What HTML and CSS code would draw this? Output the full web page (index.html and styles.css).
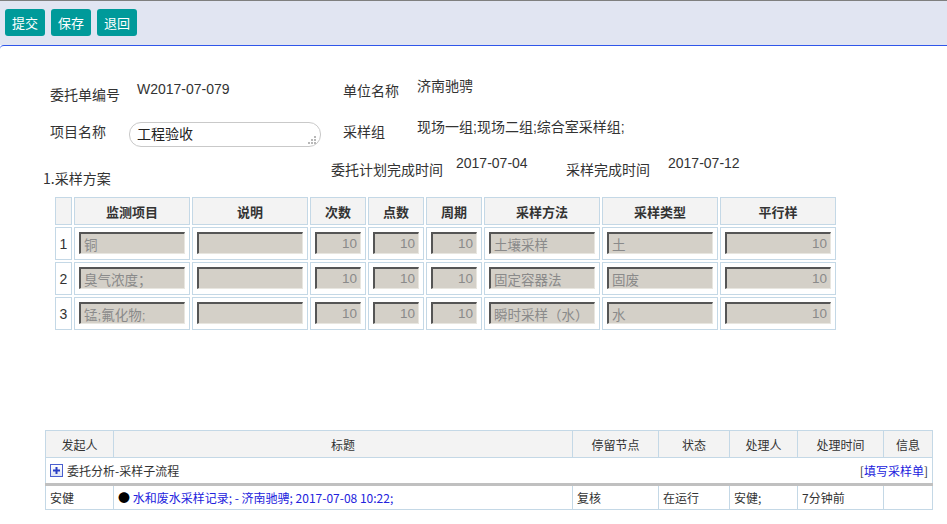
FILE: index.html
```html
<!DOCTYPE html>
<html lang="zh-CN">
<head>
<meta charset="utf-8">
<title>委托单</title>
<link rel="stylesheet" href="styles.css">
</head>
<body>
<div class="toolbar">
  <button class="btn">提交</button>
  <button class="btn">保存</button>
  <button class="btn">退回</button>
</div>
<div class="panel">
  <div class="frow r1">
    <div class="lbl w87 m8">委托单编号</div>
    <div class="val w206 m3">W2017-07-079</div>
    <div class="lbl w74 m4">单位名称</div>
    <div class="val m0">济南驰骋</div>
  </div>
  <div class="frow r2">
    <div class="lbl w79 m4">项目名称</div>
    <div class="tarea">工程验收<svg class="grip" width="10" height="10" viewBox="0 0 10 10"><g fill="#b8b8b8"><rect x="7" y="1" width="2" height="2"/><rect x="4" y="4" width="2" height="2"/><rect x="7" y="4" width="2" height="2"/><rect x="1" y="7" width="2" height="2"/><rect x="4" y="7" width="2" height="2"/><rect x="7" y="7" width="2" height="2"/></g></svg></div>
    <div class="lbl w74 m4 ml22">采样组</div>
    <div class="val m0">现场一组;现场二组;综合室采样组;</div>
  </div>
  <div class="frow r3">
    <div class="lbl w288 m15">1.采样方案</div>
    <div class="lbl w125 m6">委托计划完成时间</div>
    <div class="val w110 m0">2017-07-04</div>
    <div class="lbl w102 m6">采样完成时间</div>
    <div class="val m0">2017-07-12</div>
  </div>

  <table class="plan">
    <thead>
      <tr>
        <th class="c-idx"></th>
        <th class="c-wide">监测项目</th>
        <th class="c-wide">说明</th>
        <th class="c-num">次数</th>
        <th class="c-num">点数</th>
        <th class="c-num">周期</th>
        <th class="c-wide">采样方法</th>
        <th class="c-wide">采样类型</th>
        <th class="c-wide">平行样</th>
      </tr>
    </thead>
    <tbody>
      <tr>
        <td class="idx">1</td>
        <td><input class="fld" value="铜" readonly></td>
        <td><input class="fld" value="" readonly></td>
        <td><input class="fld num" value="10" readonly></td>
        <td><input class="fld num" value="10" readonly></td>
        <td><input class="fld num" value="10" readonly></td>
        <td><input class="fld" value="土壤采样" readonly></td>
        <td><input class="fld" value="土" readonly></td>
        <td><input class="fld num" value="10" readonly></td>
      </tr>
      <tr>
        <td class="idx">2</td>
        <td><input class="fld" value="臭气浓度；" readonly></td>
        <td><input class="fld" value="" readonly></td>
        <td><input class="fld num" value="10" readonly></td>
        <td><input class="fld num" value="10" readonly></td>
        <td><input class="fld num" value="10" readonly></td>
        <td><input class="fld" value="固定容器法" readonly></td>
        <td><input class="fld" value="固废" readonly></td>
        <td><input class="fld num" value="10" readonly></td>
      </tr>
      <tr>
        <td class="idx">3</td>
        <td><input class="fld" value="锰;氟化物;" readonly></td>
        <td><input class="fld" value="" readonly></td>
        <td><input class="fld num" value="10" readonly></td>
        <td><input class="fld num" value="10" readonly></td>
        <td><input class="fld num" value="10" readonly></td>
        <td><input class="fld" value="瞬时采样（水）" readonly></td>
        <td><input class="fld" value="水" readonly></td>
        <td><input class="fld num" value="10" readonly></td>
      </tr>
    </tbody>
  </table>

  <table class="flow">
    <colgroup>
      <col class="f1"><col class="f2"><col class="f3"><col class="f4"><col class="f5"><col class="f6"><col class="f7">
    </colgroup>
    <thead>
      <tr>
        <th>发起人</th>
        <th>标题</th>
        <th>停留节点</th>
        <th>状态</th>
        <th>处理人</th>
        <th>处理时间</th>
        <th>信息</th>
      </tr>
    </thead>
    <tbody>
      <tr class="grp">
        <td colspan="7">
          <div class="grp-in">
            <span class="plus"><svg width="11" height="11" viewBox="0 0 11 11"><path d="M5.5 2v7M2 5.5h7" stroke="#2a3fc4" stroke-width="2"/></svg></span>
            <span class="grp-title">委托分析-采样子流程</span>
            <span class="grp-act">[<a class="lnk">填写采样单</a>]</span>
          </div>
        </td>
      </tr>
      <tr class="data">
        <td>安健</td>
        <td><span class="dot">●</span> <a class="lnk">水和废水采样记录; - 济南驰骋; 2017-07-08 10:22;</a></td>
        <td>复核</td>
        <td>在运行</td>
        <td>安健;</td>
        <td>7分钟前</td>
        <td></td>
      </tr>
    </tbody>
  </table>
</div>
</body>
</html>
```

FILE: styles.css
```css
html, body {
  margin: 0;
  padding: 0;
  background: #fff;
}
body {
  font-family: "Liberation Sans", "Noto Sans CJK SC", sans-serif;
  color: #333;
  font-size: 14px;
}

.toolbar {
  box-sizing: border-box;
  height: 45px;
  border-top: 1px solid #7f7f7f;
  background: #e1e5f2;
  display: flex;
  align-items: flex-start;
  gap: 6px;
  padding: 8px 5px 0;
}
.btn {
  width: 40px;
  height: 27px;
  padding: 0;
  border: 0;
  border-radius: 3px;
  background: #009a9a;
  color: #fff;
  font-family: "Noto Sans CJK SC", sans-serif;
  font-size: 13px;
  line-height: 27px;
}

.panel {
  border-top: 1px solid #2f56ea;
  border-top-left-radius: 4px;
  padding-top: 30px;
}

.frow {
  display: flex;
  align-items: flex-start;
  line-height: 20px;
}
.r1 { height: 41px; padding-left: 50px; }
.r2 { height: 36px; padding-left: 50px; }
.r3 { height: 42px; padding-left: 43px; }

.lbl {
  font-family: "Noto Sans CJK SC", sans-serif;
  font-size: 14px;
  color: #333;
  white-space: nowrap;
}
.val {
  font-size: 14px;
  color: #333;
  white-space: nowrap;
}
.w74 { width: 74px; }
.w79 { width: 79px; }
.w87 { width: 87px; }
.w102 { width: 102px; }
.w110 { width: 110px; }
.w125 { width: 125px; }
.w206 { width: 206px; }
.w288 { width: 288px; }
.m0 { margin-top: 0; }
.m3 { margin-top: 3px; }
.m4 { margin-top: 4px; }
.m6 { margin-top: 6px; }
.m8 { margin-top: 8px; }
.m15 { margin-top: 15px; }
.ml22 { margin-left: 22px; }

.tarea {
  position: relative;
  box-sizing: border-box;
  width: 192px;
  height: 25px;
  margin-top: 5px;
  border: 1px solid #c9c9c9;
  border-radius: 12px;
  padding: 0 0 0 7px;
  font-family: "Noto Sans CJK SC", sans-serif;
  font-size: 14px;
  line-height: 20px;
  color: #222;
}
.grip {
  position: absolute;
  right: 3px;
  bottom: 1px;
}

/* plan table */
.plan {
  margin-left: 53px;
  border-collapse: separate;
  border-spacing: 2px;
  table-layout: fixed;
  width: 785px;
}
.plan th, .plan td {
  border: 1px solid #c4d8e6;
  padding: 0;
}
.plan th {
  height: 26px;
  background: #f3f3f3;
  font-family: "Noto Sans CJK SC", sans-serif;
  font-size: 13px;
  font-weight: bold;
  color: #333;
  text-align: center;
}
.c-idx { width: 15px; }
.c-wide { width: 114px; }
.c-num { width: 54px; }
.plan td {
  height: 31px;
  box-sizing: border-box;
  padding: 4px 4px 5px 4px;
  vertical-align: top;
}
.plan td.idx {
  padding: 0;
  vertical-align: middle;
  text-align: center;
  font-size: 14px;
  color: #333;
}
.fld {
  display: block;
  box-sizing: border-box;
  width: 100%;
  height: 22px;
  margin: 0;
  padding: 0 2px 0 3px;
  background: #d4d0c8;
  border-top: 2px solid #555;
  border-left: 2px solid #555;
  border-right: 1px solid #e8e6e0;
  border-bottom: 1px solid #e8e6e0;
  font-family: "Liberation Sans", "Noto Sans CJK SC", sans-serif;
  font-size: 13.5px;
  color: #8a8a8a;
  outline: none;
}
.fld.num { text-align: right; padding-right: 3px; }

/* flow table */
.flow {
  margin-left: 45px;
  margin-top: 98px;
  width: 888px;
  border-collapse: collapse;
  table-layout: fixed;
  font-family: "Noto Sans CJK SC", sans-serif;
  font-size: 12px;
}
.f1 { width: 68px; }
.f2 { width: 459px; }
.f3 { width: 86px; }
.f4 { width: 71px; }
.f5 { width: 68px; }
.f6 { width: 86px; }
.f7 { width: 49px; }
.flow th, .flow td {
  border: 1px solid #c4d8e6;
  padding: 0 4px;
  white-space: nowrap;
  overflow: hidden;
}
.flow th {
  height: 26px;
  background: #f3f3f3;
  font-weight: normal;
  color: #333;
  text-align: center;
}
.grp td {
  height: 25px;
  padding: 0 4px 0 4px;
}
.grp-in {
  display: flex;
  align-items: center;
}
.plus {
  box-sizing: border-box;
  width: 13px;
  height: 13px;
  border: 1px solid #4a5fd0;
  background: linear-gradient(#ffffff, #dfe4f5);
  display: flex;
  align-items: center;
  justify-content: center;
  margin-right: 4px;
}
.plus svg { display: block; }
.grp-title { color: #333; }
.grp-act {
  margin-left: auto;
  color: #333;
}
.lnk { color: #2222dd; }
.data td {
  height: 23px;
  border-top: 3px solid #c0c0c0;
  color: #333;
}
.dot { color: #000; }
```
